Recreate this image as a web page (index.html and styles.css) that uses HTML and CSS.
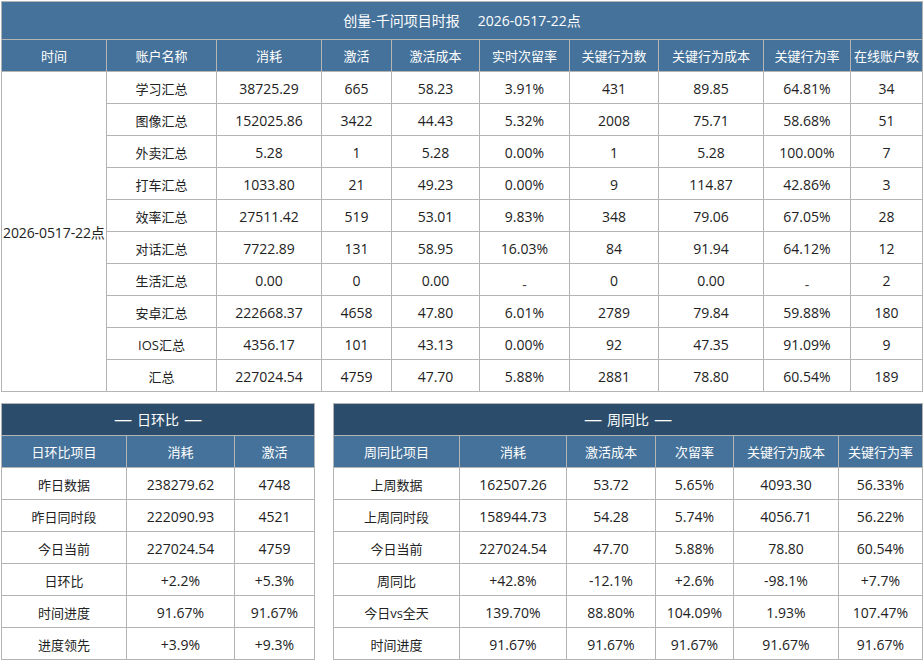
FILE: index.html
```html
<!DOCTYPE html>
<html lang="zh-CN">
<head>
<meta charset="utf-8">
<title>创量-千问项目时报</title>
<link rel="stylesheet" href="styles.css">
</head>
<body>
<div class="page">
  <table class="grid main">
    <colgroup>
      <col style="width:105px"><col style="width:110px"><col style="width:105px"><col style="width:70px"><col style="width:88px"><col style="width:90px"><col style="width:89px"><col style="width:105px"><col style="width:87px"><col style="width:72px">
    </colgroup>
    <tr class="title"><td colspan="10"><span>创量-千问项目时报</span><span class="date">2026-0517-22点</span></td></tr>
    <tr class="head"><td>时间</td><td>账户名称</td><td>消耗</td><td>激活</td><td>激活成本</td><td>实时次留率</td><td>关键行为数</td><td>关键行为成本</td><td>关键行为率</td><td>在线账户数</td></tr>
    <tr><td rowspan="10" class="time">2026-0517-22点</td><td class="lbl">学习汇总</td><td>38725.29</td><td>665</td><td>58.23</td><td>3.91%</td><td>431</td><td>89.85</td><td>64.81%</td><td>34</td></tr>
    <tr><td>图像汇总</td><td>152025.86</td><td>3422</td><td>44.43</td><td>5.32%</td><td>2008</td><td>75.71</td><td>58.68%</td><td>51</td></tr>
    <tr><td>外卖汇总</td><td>5.28</td><td>1</td><td>5.28</td><td>0.00%</td><td>1</td><td>5.28</td><td>100.00%</td><td>7</td></tr>
    <tr><td>打车汇总</td><td>1033.80</td><td>21</td><td>49.23</td><td>0.00%</td><td>9</td><td>114.87</td><td>42.86%</td><td>3</td></tr>
    <tr><td>效率汇总</td><td>27511.42</td><td>519</td><td>53.01</td><td>9.83%</td><td>348</td><td>79.06</td><td>67.05%</td><td>28</td></tr>
    <tr><td>对话汇总</td><td>7722.89</td><td>131</td><td>58.95</td><td>16.03%</td><td>84</td><td>91.94</td><td>64.12%</td><td>12</td></tr>
    <tr><td>生活汇总</td><td>0.00</td><td>0</td><td>0.00</td><td><span class="nil">-</span></td><td>0</td><td>0.00</td><td><span class="nil">-</span></td><td>2</td></tr>
    <tr><td>安卓汇总</td><td>222668.37</td><td>4658</td><td>47.80</td><td>6.01%</td><td>2789</td><td>79.84</td><td>59.88%</td><td>180</td></tr>
    <tr><td>IOS汇总</td><td>4356.17</td><td>101</td><td>43.13</td><td>0.00%</td><td>92</td><td>47.35</td><td>91.09%</td><td>9</td></tr>
    <tr><td>汇总</td><td>227024.54</td><td>4759</td><td>47.70</td><td>5.88%</td><td>2881</td><td>78.80</td><td>60.54%</td><td>189</td></tr>
  </table>

  <div class="bottom">
    <table class="grid small left">
      <colgroup><col style="width:125px"><col style="width:108px"><col style="width:80px"></colgroup>
      <tr class="band"><td colspan="3"><span class="dash">—</span> 日环比 <span class="dash">—</span></td></tr>
      <tr class="head"><td>日环比项目</td><td>消耗</td><td>激活</td></tr>
      <tr><td>昨日数据</td><td>238279.62</td><td>4748</td></tr>
      <tr><td>昨日同时段</td><td>222090.93</td><td>4521</td></tr>
      <tr><td>今日当前</td><td>227024.54</td><td>4759</td></tr>
      <tr><td>日环比</td><td>+2.2%</td><td>+5.3%</td></tr>
      <tr><td>时间进度</td><td>91.67%</td><td>91.67%</td></tr>
      <tr><td>进度领先</td><td>+3.9%</td><td>+9.3%</td></tr>
    </table>

    <table class="grid small right">
      <colgroup><col style="width:126px"><col style="width:107px"><col style="width:89px"><col style="width:78px"><col style="width:105px"><col style="width:84px"></colgroup>
      <tr class="band"><td colspan="6"><span class="dash">—</span> 周同比 <span class="dash">—</span></td></tr>
      <tr class="head"><td>周同比项目</td><td>消耗</td><td>激活成本</td><td>次留率</td><td>关键行为成本</td><td>关键行为率</td></tr>
      <tr><td>上周数据</td><td>162507.26</td><td>53.72</td><td>5.65%</td><td>4093.30</td><td>56.33%</td></tr>
      <tr><td>上周同时段</td><td>158944.73</td><td>54.28</td><td>5.74%</td><td>4056.71</td><td>56.22%</td></tr>
      <tr><td>今日当前</td><td>227024.54</td><td>47.70</td><td>5.88%</td><td>78.80</td><td>60.54%</td></tr>
      <tr><td>周同比</td><td>+42.8%</td><td>-12.1%</td><td>+2.6%</td><td>-98.1%</td><td>+7.7%</td></tr>
      <tr><td>今日vs全天</td><td>139.70%</td><td>88.80%</td><td>104.09%</td><td>1.93%</td><td>107.47%</td></tr>
      <tr><td>时间进度</td><td>91.67%</td><td>91.67%</td><td>91.67%</td><td>91.67%</td><td>91.67%</td></tr>
    </table>
  </div>
</div>
</body>
</html>
```

FILE: styles.css
```css
html, body {
  margin: 0;
  padding: 0;
  background: #ffffff;
}

body {
  font-family: "Open Sans", "Noto Sans CJK SC", sans-serif;
  font-size: 14px;
  color: #222222;
}

.page {
  padding: 1px 0 0 1px;
  width: 922px;
}

.grid {
  border-collapse: collapse;
  table-layout: fixed;
}

.grid td {
  border: 1px solid #b4b4b4;
  padding: 3px 0 0 0;
  text-align: center;
  white-space: nowrap;
  line-height: 16px;
  font-size: 14px;
}

.grid td:first-child,
.main td.lbl {
  font-size: 13px;
}

.grid tr {
  height: 32px;
}

.main {
  width: 922px;
}

.main .title {
  height: 38px;
}

.main .title td {
  background: #45729a;
  color: #ffffff;
  font-size: 14px;
  padding-top: 1px;
}

.main .title .date {
  margin-left: 18px;
}

.grid .head td {
  background: #45729a;
  color: #ffffff;
  font-size: 13px;
  padding-top: 1px;
}

.main td.time {
  overflow: visible;
  text-align: left;
  padding-left: 1px;
  font-size: 14px;
  letter-spacing: -0.1px;
}

.nil {
  display: inline-block;
  transform: translateY(4px);
  color: #444444;
}

.bottom {
  display: flex;
  gap: 18px;
  margin-top: 11px;
  align-items: flex-start;
}

.small.left {
  width: 314px;
}

.small.right {
  width: 590px;
}

.grid .band td {
  background: #2b4d6b;
  color: #ffffff;
  font-size: 14px;
  padding-top: 1px;
}

.dash {
  display: inline-block;
  transform: scaleX(1.3);
  margin: 0 3px;
}
```
